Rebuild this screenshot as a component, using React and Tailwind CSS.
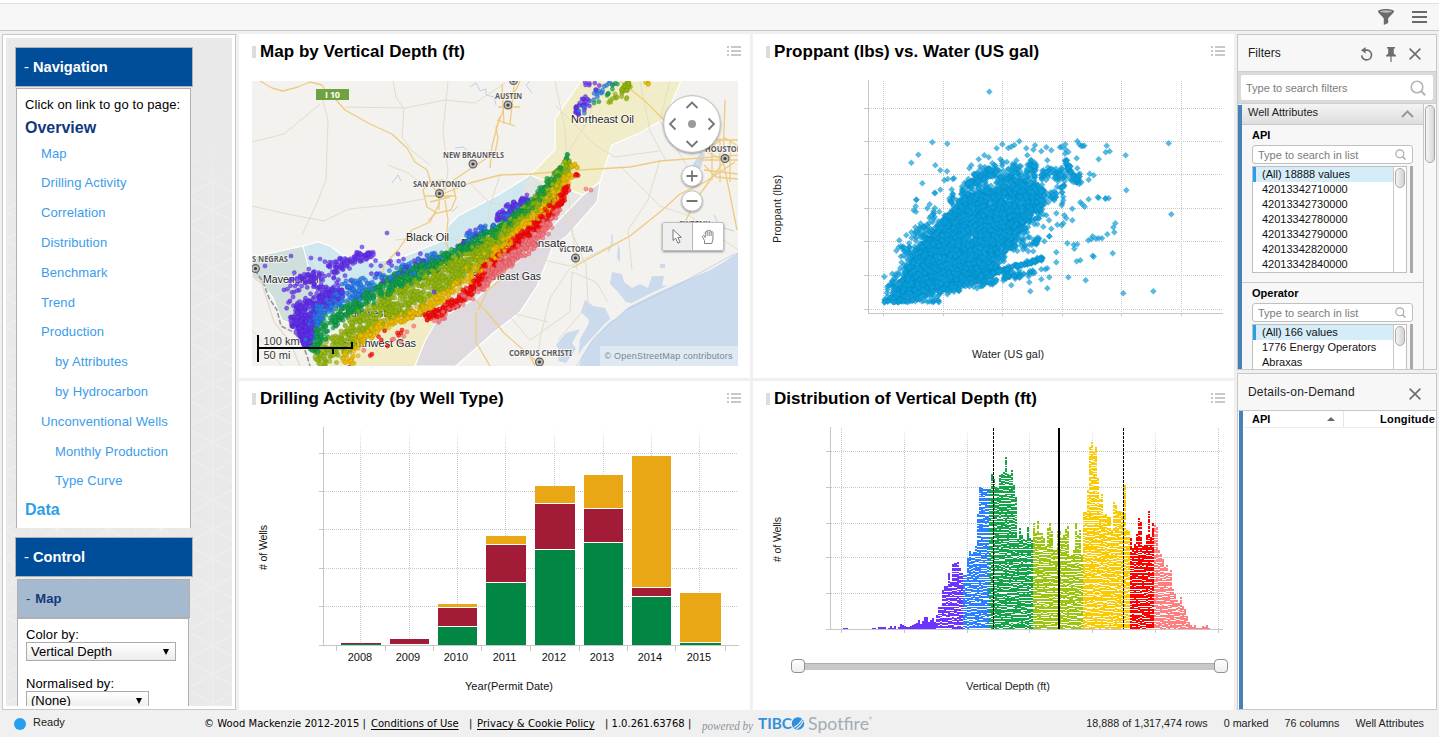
import React from 'react';

function makeRandom(seed) {
  let s = seed;
  return () => {
    s = (s * 1664525 + 1013904223) % 4294967296;
    return s / 4294967296;
  };
}

/* ---------- shared pieces ---------- */

function ListIcon() {
  return (
    <svg width="14" height="11" viewBox="0 0 14 11" fill="#c8c8c8" shapeRendering="crispEdges">
      <path d="M0 0h2v2H0zM4 0h10v2H4zM0 4h2v2H0zM4 4h10v2H4zM0 8h2v2H0zM4 8h10v2H4z" />
    </svg>
  );
}

function CloseIcon() {
  return (
    <svg width="12" height="12" viewBox="0 0 12 12" fill="none" stroke="#6e6e6e" strokeWidth="1.6">
      <path d="M.6.6l10.8 10.8M11.4.6L.6 11.4" />
    </svg>
  );
}

function SearchIcon({ size, color }) {
  return (
    <svg width={size} height={size} viewBox="0 0 16 16" fill="none" stroke={color} strokeWidth="1.6">
      <circle cx="7" cy="7" r="5.8" />
      <path d="M11.2 11.2l4 4" strokeWidth="2" />
    </svg>
  );
}

function ChartPanel({ title, children }) {
  return (
    <section className="flex min-h-0 min-w-0 flex-col overflow-hidden bg-white">
      <header className="flex h-8 shrink-0 items-center pr-[9px] pl-[13px]">
        <span className="mt-[4px] h-3 w-1 bg-[#dcdcdc]" />
        <h2 className="mt-[4px] ml-1 text-[17px] leading-5 font-bold tracking-[0.04px] whitespace-nowrap text-black">{title}</h2>
        <span className="mt-[3px] ml-auto">
          <ListIcon />
        </span>
      </header>
      {children}
    </section>
  );
}

const DOTTED = { stroke: '#c9c9c9', strokeDasharray: '1 1', strokeWidth: 1, shapeRendering: 'crispEdges' };
const AXIS = { stroke: '#c6c6c6', strokeWidth: 1, fill: 'none', shapeRendering: 'crispEdges' };

/* ---------- map ---------- */

const COLORS = {
  purple: ['#6431f0', '#4a22b8'],
  blue: ['#2a7bea', '#1b5cb8'],
  green: ['#12a24a', '#0a7836'],
  olive: ['#93b80f', '#6f8d08'],
  yellow: ['#efbe00', '#b98f00'],
  red: ['#fb0a0a', '#c00000'],
  pink: ['#f47880', '#d04a55'],
};

const BANDS = [
  ['purple', 220, [[291, 322, 8], [303, 320, 10], [306, 335, 8], [308, 345, 4]]],
  ['purple', 200, [[298, 315, 12], [318, 303, 9], [342, 290, 7]]],
  ['purple', 75, [[330, 270, 9], [350, 261, 7], [374, 252, 4]]],
  ['purple', 50, [[295, 280, 7], [312, 273, 8], [325, 287, 8]]],
  ['purple', 48, [[280, 298, 12], [300, 290, 18], [350, 275, 20]]],
  ['purple', 26, [[370, 270, 18], [400, 265, 11], [425, 258, 6]]],
  ['purple', 60, [[496, 220, 3], [510, 208, 6], [529, 197, 4]]],
  ['purple', 12, [[455, 246, 6], [478, 232, 5], [494, 224, 6]]],
  ['blue', 260, [[308, 345, 4], [315, 317, 7], [328, 304, 9], [352, 290, 11], [372, 286, 8]]],
  ['blue', 75, [[372, 282, 8], [396, 276, 8], [414, 266, 8], [442, 252, 5]]],
  ['blue', 35, [[465, 240, 4], [480, 232, 4], [496, 227, 4]]],
  ['blue', 24, [[500, 222, 5], [515, 210, 4], [528, 200, 4]]],
  ['green', 210, [[313, 352, 5], [322, 328, 10], [342, 313, 6], [374, 295, 8]]],
  ['green', 340, [[374, 294, 9], [400, 280, 9], [437, 263, 7], [474, 243, 5]]],
  ['green', 190, [[474, 243, 6], [500, 228, 6], [512, 218, 6], [533, 203, 4], [553, 180, 6], [562, 165, 3]]],
  ['green', 6, [[567, 160, 1], [568, 149, 1]]],
  ['olive', 270, [[318, 363, 10], [340, 343, 12], [366, 320, 12], [390, 307, 12]]],
  ['olive', 580, [[385, 309, 14], [423, 287, 15], [463, 265, 12], [490, 245, 8]]],
  ['olive', 300, [[490, 245, 7], [510, 225, 6], [533, 208, 7], [548, 195, 7], [560, 177, 8], [569, 160, 3]]],
  ['yellow', 75, [[348, 364, 8], [354, 345, 7], [373, 329, 6]]],
  ['yellow', 150, [[373, 329, 6], [413, 314, 5], [440, 299, 6]]],
  ['yellow', 340, [[438, 300, 5], [470, 274, 8], [497, 251, 7], [512, 232, 5], [540, 211, 6], [556, 193, 6], [570, 173, 4]]],
  ['yellow', 8, [[572, 168, 2], [577, 166, 3]]],
  ['red', 11, [[347, 364, 7], [380, 342, 10], [406, 325, 6]]],
  ['red', 100, [[426, 318, 4], [447, 308, 5], [472, 290, 5]]],
  ['red', 300, [[470, 290, 5], [490, 265, 6], [510, 246, 5], [535, 226, 5], [557, 204, 6], [569, 186, 3]]],
  ['red', 4, [[575, 175, 2], [581, 173, 1]]],
  ['pink', 45, [[433, 321, 4], [455, 303, 6], [482, 286, 6]]],
  ['pink', 300, [[478, 288, 5], [495, 269, 7], [520, 252, 7], [541, 232, 7], [558, 208, 4]]],
  ['pink', 7, [[364, 352, 4], [395, 340, 6], [413, 325, 4]]],
  ['purple', 26, [[574, 113, 5], [580, 108, 6], [588, 98, 5]]],
  ['purple', 7, [[584, 82, 3], [592, 88, 6], [603, 84, 4]]],
  ['blue', 22, [[578, 115, 3], [592, 100, 4], [604, 87, 5], [612, 82, 3]]],
  ['green', 9, [[588, 104, 3], [608, 96, 4], [616, 83, 4]]],
  ['olive', 12, [[606, 102, 4], [616, 94, 4], [627, 98, 4]]],
  ['olive', 30, [[622, 91, 3], [630, 83, 4]]],
  ['yellow', 4, [[645, 82, 2], [650, 84, 2]]],
];

function buildWells() {
  const rnd = makeRandom(77);
  const dots = [];
  BANDS.forEach(([color, count, pts]) => {
    const lengths = pts.slice(1).map((p, i) => Math.hypot(p[0] - pts[i][0], p[1] - pts[i][1]));
    const total = lengths.reduce((a, b) => a + b, 0);
    for (let n = 0; n < count; n++) {
      let d = rnd() * total;
      let i = 0;
      while (i < lengths.length - 1 && d > lengths[i]) {
        d -= lengths[i];
        i++;
      }
      const t = Math.min(1, d / lengths[i]);
      const a = pts[i];
      const b = pts[i + 1];
      const w = a[2] + (b[2] - a[2]) * t;
      const off = (rnd() * 1.7 + rnd() * 0.6 - 1.15) * w;
      const nx = -(b[1] - a[1]) / lengths[i];
      const ny = (b[0] - a[0]) / lengths[i];
      dots.push({ x: a[0] + (b[0] - a[0]) * t + nx * off, y: a[1] + (b[1] - a[1]) * t + ny * off, color, k: rnd() });
    }
  });
  [[387, 233], [362, 247], [291, 256], [265, 266], [311, 258], [320, 259], [398, 254], [434, 292]].forEach(([x, y]) =>
    dots.push({ x, y, color: 'purple', k: 1 })
  );
  [[586, 189], [591, 190]].forEach(([x, y]) => dots.push({ x, y, color: 'pink', k: 1 }));
  return dots.sort((p, q) => p.k - q.k);
}
const WELLS = buildWells();

const CITIES = [
  ['AUSTIN', 495, 99, 27, 508, 105],
  ['NEW BRAUNFELS', 443, 157.5, 61, 473, 164],
  ['SAN ANTONIO', 413, 187, 53, 439.5, 193.5],
  ['S NEGRAS', 252, 262, 36, 255.5, 268.5],
  ['VICTORIA', 559, 251.5, 34, 575.5, 258],
  ['HOUSTON', 705, 152, 38, 725, 158.5],
  ['CORPUS CHRISTI', 509, 355.5, 63, 539.5, 362],
  ['SWEENY', 679, 226.5, 31, -10, -10],
];

const REGIONS = [
  ['Northeast Oil', 571, 123, 63],
  ['Black Oil', 406, 240.5, 43],
  ['Maverick Oil', 263, 282.5, 58],
  ['Eastern Condensate', 461, 247, 105],
  ['Southeast Gas', 472, 280, 69],
  ['Southwest Condensate', 338, 317, 107],
  ['Southwest Gas', 342, 346.5, 74],
];

const MAJOR_ROADS = [
  'M260 81l12 7 11 3 15-4 12-5 12 3 3 5 6 4 14 16 25 14 22 10 15 14 8 14 12 8 5 16 8 8 6 4',
  'M438 196l10-12 25-17 22-14 3-15 -2-10 6-14 4-14 10-10 4-9',
  'M440 195l30-12 30-8 30-1 50-4 50-3 30-6 80-6',
  'M440 202l-10 20-18 8-14 20-14 15-2 16',
  'M445 200l3 20-2 22 10 30 16 25 14 14 18 22 32 28',
  'M572 268l18-10 40-22 30-24 20-18 25-12 30-20',
  'M620 81l25 20 40 40 40 20M725 160l-28 38-18 36M725 100l-2 60 14 70',
  'M478 310l10-20 12-10 30-45 25-30',
  'M490 366l-14-24 0-30M535 366l-6-12',
  'M423 190l6-8 14-2 10 6 3 12-5 12-14 3-10-6zM430 202l20-5M439 180v30M424 196h32M436 213l-8 8',
  'M705 140h33M700 160h38M704 170l34 4M712 140v40M720 138v44M730 140v42M705 150l20-12 13 8M704 165l12 12 22 2',
  'M500 95l20 2M498 107h22M502 84l2 40M514 86l-4 38M497 120l18 6M500 116l-8 30-2 22',
];

const MINOR_ROADS = [
  'M252 206l35 8 37 7 25-12 40-4 35-6',
  'M345 107l60 1 40-8 30 3 30-20',
  'M393 81l3 16 8 12-2 28 10 14 18 14',
  'M448 81l-5 50 5 40-3 20',
  'M320 90l8 30-2 60-10 25-14 30',
  'M252 142l32-8 36-30',
  'M388 165l20 8 20 16',
  'M395 240l45-4 60 14 70 16 60-30',
  'M577 270l-8-70-4-70-10-49',
  'M530 175l30 30 26 60 2 40-30 35',
  'M570 268l-20 30-10 40-2 28',
  'M572 272l24 10 12 20',
  'M555 105l40 40 20 12 44-6M600 81l-12 40-32 50',
  'M620 166l40 40 30 10 48 34M660 160l-12 40-20 30 4 40',
  'M640 81l10 50 16 30M670 81l-10 40 30 50',
  'M500 175l-12 36 4 24M470 183l20 20 46 6',
  'M474 310l34 2 40 10M476 310l-16 30-8 26M474 310l-20-30-6-20',
  'M530 340l-24-28M530 340l40-28 2-40M340 305l40 50M252 330l30 36',
];

function MapChart() {
  return (
    <svg className="block h-[312px] w-[511px] shrink-0" viewBox="239 66 511 312">
      <defs>
        <clipPath id="mapClip">
          <rect x="252" y="81" width="486" height="285" />
        </clipPath>
        <filter id="soft" x="-20%" y="-20%" width="140%" height="140%">
          <feDropShadow dx="0" dy="1" stdDeviation="1.2" floodColor="#000" floodOpacity=".45" />
        </filter>
      </defs>
      <g clipPath="url(#mapClip)">
        <rect x="252" y="81" width="486" height="285" fill="#f3f2ef" />
        <g fill="#cbdaed">
          <path d="M738 252l-14 10-14 8-18 7-20 8-18 10-22 8-12 12-16 14-14 14-8 14-4 12h164z" />
          <path d="M612 272l10 2 2 8 8 6 8-4 8 4 4-12 12 0-2 10 20-2-12 8-20 6-12 6-12-2-8-10-8-8zM585 300l8 6 12 2 6 12 14-2 4-8 2 12-18 12-10-4-16 2 2-12-8-8zM556 345l10-12 14-4-8 14 4 6-10 14-8-2 2-10zM660 264h5v4h-5zM693 164l8-12 4 2-4 14-6 4zM618 244l2 6 0 12-3-4z" />
          <path d="M588 325l16-6 8 4-10 10-14 10-10 16 2-20z" />
        </g>
        <path d="M732 254l-22 15-34 14-24 11-24 12-22 18-22 24-12 19" fill="none" stroke="#f3f2ef" strokeWidth="2" />
        <path d="M734 254l-58 32-50 24-32 28-20 32" fill="none" stroke="#b9c9de" strokeWidth=".7" />
        <g fill="none" stroke="#b5cde6" strokeWidth=".9">
          <path d="M470 87l6-4 4 8 6-2 0 6 8 2 2 8M392 183l6-8 3 6M455 148l8-1 4 3M452 212l6-6M532 93l-6-8 4-4M608 252l4-8 0-10M714 215l6 12 14 4M660 88l6 6 4-6 8 3M648 96l10-2 6 8" />
        </g>
        <g stroke="#fff" strokeWidth="1.2">
          <path d="M252 257l20-4 31-7 15 22 4 32 -12 40-14-14-14-6-10-24-14-16-6-3z" fill="#c9dcd8" fillOpacity=".85" />
          <path d="M303 246l15-4 12 4 12 9 28 7 30-4 30-12 15-6 3-14 10-10 42-22 30-19 10 6 10 14-60 40-90 60-50 12-30 20-4-30z" fill="#cbe5ed" fillOpacity=".9" />
          <path d="M530 175l53 20-60 65-60 50-26 10-22 46h-98l20-30 90-50 80-60z" fill="#e4e3df" fillOpacity=".8" stroke="none" />
          <path d="M581 81l-26 38v31l-25 25 53 20 17-13 12-37 28-12 25-15 10-23 6-14z" fill="#f2ecc4" fillOpacity=".9" />
          <path d="M322 366l24-36 91-14-12 25-10 25z" fill="#f2ecc4" stroke="none" />
          <path d="M437 320l40-22 55-50 51-53 17-13-3 20-30 34-14 10-16 40-17 26-28 22-36 32h-41l10-25z" fill="#dad6dd" fillOpacity=".85" />
        </g>
        <path d="M255 270l8 12 6 16 8 12 4 16 12 6 8 8 6 16 3 10" fill="none" stroke="#8f9a98" strokeWidth="1.6" strokeDasharray="5 2" />
        <path d="M252 276l10 8 12 38 16 20 10 24" fill="none" stroke="#e6d8cc" strokeWidth="1.3" />
        <g fill="none" stroke="#e3dccb" strokeWidth="1" strokeLinejoin="round">
          {MINOR_ROADS.map((d) => (
            <path key={d} d={d} />
          ))}
        </g>
        <g fill="none" stroke="#efcb80" strokeWidth="1.3" strokeLinejoin="round">
          {MAJOR_ROADS.map((d) => (
            <path key={d} d={d} />
          ))}
        </g>
        <g fontFamily="'Noto Sans','Open Sans',sans-serif" fontSize="8.6" fontWeight="700" fill="#5c5c5c" stroke="#fff" strokeWidth="1.6" strokeOpacity=".8" paintOrder="stroke">
          {CITIES.map(([name, x, y, w]) => (
            <text key={name} x={x} y={y} textLength={w} lengthAdjust="spacingAndGlyphs">{name}</text>
          ))}
        </g>
        {[...CITIES.map((c) => [c[4], c[5]]), [513.5, 80.5]].map(([x, y]) => (
          <g key={`${x}-${y}`}>
            <circle cx={x} cy={y} r="3.9" fill="#bcbcbc" stroke="#5d5d5d" strokeWidth="1.1" />
            <circle cx={x} cy={y} r="1.6" fill="#3c3c3c" />
          </g>
        ))}
        <rect x="316" y="89" width="33" height="11" fill="#70a340" />
        <text x="325" y="98" textLength="15" fontFamily="'Open Sans',sans-serif" fontSize="9" fontWeight="700" fill="#fff">I 10</text>
        <g fontFamily="'Liberation Sans',sans-serif" fontSize="11.3" fill="#222" stroke="#fff" strokeWidth="1.8" strokeOpacity=".75" paintOrder="stroke">
          {REGIONS.map(([name, x, y, w]) => (
            <text key={name} x={x} y={y} textLength={w} lengthAdjust="spacingAndGlyphs">{name}</text>
          ))}
        </g>
        <g strokeWidth=".6">
          {WELLS.map((d, i) => (
            <circle key={i} cx={d.x.toFixed(1)} cy={d.y.toFixed(1)} r="2.1" fill={COLORS[d.color][0]} fillOpacity=".72" stroke={COLORS[d.color][1]} strokeOpacity=".6" />
          ))}
        </g>
        <rect x="600" y="346" width="138" height="20" fill="#e6edf6" fillOpacity=".75" />
        <text x="604.5" y="359" textLength="128" fontFamily="'Liberation Sans',sans-serif" fontSize="9" fill="#7d868f">© OpenStreetMap contributors</text>
        <path d="M258 335v27M257 348h95v-6M333 348v6" fill="none" stroke="#000" strokeWidth="2" shapeRendering="crispEdges" />
        <g fontFamily="'Liberation Sans',sans-serif" fontSize="11" fill="#333" stroke="#fff" strokeWidth="1.6" strokeOpacity=".7" paintOrder="stroke">
          <text x="263.5" y="345">100 km</text>
          <text x="263.5" y="358.5">50 mi</text>
        </g>
        <g filter="url(#soft)" fill="#fff" stroke="#b5b5b5" strokeWidth=".8">
          <circle cx="692" cy="124" r="28.3" />
          <circle cx="692" cy="176" r="10.2" />
          <circle cx="692" cy="201" r="10.2" />
          <rect x="662.5" y="222.5" width="61" height="28" rx="1.5" />
        </g>
        <path d="M663 223h29v27h-29z" fill="#efefef" />
        <path d="M692.5 223v27" stroke="#b5b5b5" />
        <circle cx="692" cy="124" r="4" fill="#9b9b9b" />
        <g fill="none" stroke="#757575" strokeWidth="1.8">
          <path d="M686.500 108l5.500-5.500 5.500 5.500M686.500 141l5.500 5.500 5.500-5.500M675.500 118.500l-5.500 5.500 5.500 5.500M708.500 118.500l5.500 5.500-5.500 5.500" />
          <path d="M686.500 176h11M692 170.500v11M686.500 201h11" />
        </g>
        <path d="M673 229.500v11l2.600-2.400 2.300 5 2.200-1-2.300-4.800h3.500z" fill="#fff" stroke="#777" strokeWidth="1" />
        <path d="M704.500 243.500v-3l-2.300-4 1.500-1 1.600 2v-5.500q1-1.400 1.900 0v-1.200q1-1.300 2 0 1-1 1.900.3v1q1.200-1 2 .4l-.3 7.500-1 3.500zM707.200 232v4M709.200 231.500v4.500M711.100 232v4" fill="#fff" stroke="#777" strokeWidth=".9" />
      </g>
    </svg>
  );
}

/* ---------- scatter ---------- */

const CLOUD = [[405, 815], [470, 812], [590, 780], [700, 752], [745, 725], [740, 690], [765, 650], [830, 580], [860, 530], [885, 480], [850, 458], [770, 470], [700, 480], [650, 500], [600, 545], [560, 590], [510, 640], [475, 690], [455, 750]];

const SCATTER_OUTLIERS = [
  [718, 185], [547, 337], [592, 341], [505, 374], [484, 398], [556, 406], [571, 421], [591, 424], [517, 460], [499, 509], [499, 509], [571, 479], [555, 490],
  [554, 488], [539, 523], [532, 535], [497, 529], [491, 541], [498, 545], [568, 545], [583, 451], [593, 447], [609, 447], [612, 445], [604, 518], [608, 493],
  [740, 355], [757, 343], [775, 354], [784, 350], [793, 345], [808, 334], [829, 355], [832, 376], [855, 346], [850, 359], [874, 364], [889, 352], [904, 361],
  [892, 391], [930, 352], [935, 350], [946, 343], [946, 358], [945, 371], [955, 366], [982, 334], [988, 343], [994, 348], [1003, 347], [998, 348], [1070, 347],
  [1067, 367], [1079, 364], [1046, 388], [1127, 376], [1256, 340], [980, 385], [982, 415], [951, 391], [948, 400], [960, 410], [1019, 431], [1031, 436], [1016, 449],
  [994, 457], [988, 440], [971, 457], [1129, 481], [1264, 553], [1043, 502], [1046, 503], [1067, 505], [1066, 506], [1076, 505], [1016, 508], [991, 517], [997, 523],
  [1004, 530], [967, 536], [967, 571], [1096, 580], [1090, 592], [1093, 607], [1072, 613], [1056, 625], [1046, 625], [1038, 626], [1028, 619], [1024, 628], [1015, 631],
  [1088, 670], [1028, 677], [1031, 680], [991, 691], [980, 694], [952, 640], [971, 644], [982, 643], [973, 656], [955, 742], [1007, 751], [1120, 790], [1210, 784],
  [919, 667], [919, 697], [898, 742], [892, 775], [841, 784], [838, 757], [874, 748], [784, 766], [892, 715], [886, 718], [874, 718], [919, 550], [943, 556], [949, 565],
  [937, 520], [935, 526], [940, 511], [937, 487], [919, 493], [913, 511], [895, 517], [889, 556], [897, 571], [880, 590], [904, 596], [898, 619], [898, 619], [883, 634],
  [940, 580], [935, 586], [922, 584], [862, 583], [850, 664], [835, 664], [860, 640], [403, 740], [427, 731], [421, 763], [412, 770], [439, 662], [446, 652], [448, 631],
  [469, 616], [484, 607], [497, 604], [496, 592], [686, 388], [703, 376], [716, 382], [664, 406], [658, 415], [691, 409], [751, 388], [757, 394], [727, 400], [404, 817],
];

function buildScatter() {
  const rnd = makeRandom(1234);
  const inside = (x, y) => {
    let hit = false;
    for (let i = 0, j = CLOUD.length - 1; i < CLOUD.length; j = i++) {
      const [xi, yi] = CLOUD[i];
      const [xj, yj] = CLOUD[j];
      if (yi > y !== yj > y && x < ((xj - xi) * (y - yi)) / (yj - yi) + xi) hit = !hit;
    }
    return hit;
  };
  const pts = [];
  while (pts.length < 3400) {
    const x = 390 + rnd() * 510;
    const y = 440 + rnd() * 385;
    if (inside(x, y)) pts.push([x + (rnd() - 0.5) * 22, Math.min(817, y + (rnd() - 0.5) * 18)]);
  }
  const strip = (n, x0, y0, x1, y1, w) => {
    for (let i = 0; i < n; i++) {
      const t = rnd();
      pts.push([x0 + (x1 - x0) * t + (rnd() - 0.5) * 8, Math.min(817, y0 + (y1 - y0) * t + (rnd() + rnd() - 1) * w)]);
    }
  };
  strip(130, 690, 742, 880, 684, 8);
  strip(40, 760, 740, 860, 728, 14);
  strip(40, 560, 795, 790, 742, 10);
  strip(30, 405, 815, 570, 812, 8);
  strip(50, 455, 670, 560, 560, 34);
  strip(80, 600, 510, 720, 450, 42);
  strip(70, 650, 460, 740, 415, 24);
  strip(80, 710, 430, 860, 410, 30);
  strip(90, 740, 460, 860, 440, 30);
  strip(75, 870, 430, 995, 440, 24);
  strip(20, 945, 390, 965, 430, 14);
  strip(90, 770, 640, 880, 530, 34);
  strip(40, 860, 530, 940, 470, 28);
  strip(35, 780, 660, 870, 620, 24);
  strip(40, 755, 690, 800, 590, 20);
  strip(16, 405, 800, 450, 720, 14);
  return pts.concat(SCATTER_OUTLIERS);
}
const SCATTER = buildScatter();

function ScatterChart() {
  return (
    <svg className="block h-[312px] w-[481px] shrink-0" viewBox="753 66 481 312">
      <g {...DOTTED}>
        {[883.5, 943.5, 1002.5, 1062.5, 1121.5, 1181.5].map((x) => (
          <path key={x} d={`M${x} 81V313`} />
        ))}
        {[108.5, 141.5, 174.5, 208.5, 241.5, 275.5, 309.5].map((y) => (
          <path key={y} d={`M869 ${y}H1222`} />
        ))}
      </g>
      <path
        {...AXIS}
        d="M868.5 80V313.5H1223M883.500 313v3M943.500 313v3M1002.500 313v3M1062.500 313v3M1121.500 313v3M1181.500 313v3M864 108.500h4M864 141.500h4M864 174.500h4M864 208.500h4M864 241.500h4M864 275.500h4M864 309.500h4"
      />
      <g fill="#0aa0dc" fillOpacity=".7" stroke="#0478b0" strokeOpacity=".4" strokeWidth=".6">
        {SCATTER.map(([x, y], i) => (
          <path key={i} d={`M${(750 + x / 3).toFixed(1)} ${(30 + y / 3 - 3).toFixed(1)}l3 3-3 3-3-3z`} />
        ))}
      </g>
      <g fontFamily="'Liberation Sans',sans-serif" fontSize="10.8" fill="#222">
        <text x="972" y="358" textLength="72">Water (US gal)</text>
        <text transform="translate(781 243) rotate(-90)" textLength="68">Proppant (lbs)</text>
      </g>
    </svg>
  );
}

/* ---------- stacked bars ---------- */

const GREEN = '#018643';
const CRIMSON = '#a21c37';
const AMBER = '#e9a715';
const YEARS = [
  [2008, 341, 40, 348, [[CRIMSON, 643, 644], [GREEN, 644, 645]]],
  [2009, 390, 39, 396, [[CRIMSON, 639, 644]]],
  [2010, 438, 39, 444, [[AMBER, 604, 607], [CRIMSON, 608, 626], [GREEN, 627, 645]]],
  [2011, 486, 40, 493, [[AMBER, 536, 544], [CRIMSON, 545, 582], [GREEN, 583, 645]]],
  [2012, 535, 40, 542, [[AMBER, 486, 503], [CRIMSON, 504, 549], [GREEN, 550, 645]]],
  [2013, 584, 39, 590, [[AMBER, 475, 508], [CRIMSON, 509, 542], [GREEN, 543, 645]]],
  [2014, 632, 39, 638, [[AMBER, 456, 587], [CRIMSON, 588, 596], [GREEN, 597, 645]]],
  [2015, 680, 41, 687, [[AMBER, 593, 642], [GREEN, 643, 645]]],
];

function ActivityChart() {
  return (
    <svg className="block h-[297px] w-[511px] shrink-0" viewBox="239 413 511 297">
      <defs>
        <linearGradient id="fadeTop" x1="0" y1="0" x2="0" y2="1">
          <stop offset="0" stopColor="#fff" />
          <stop offset="1" stopColor="#fff" stopOpacity="0" />
        </linearGradient>
      </defs>
      <g {...DOTTED}>
        {[360.5, 409.5, 457.5, 505.5, 554.5, 603.5, 651.5, 699.5].map((x) => (
          <path key={x} d={`M${x} 429V645`} />
        ))}
        {[453.5, 491.5, 529.5, 568.5, 606.5].map((y) => (
          <path key={y} d={`M324 ${y}H738`} />
        ))}
      </g>
      <rect x="325" y="427" width="413" height="22" fill="url(#fadeTop)" />
      <g shapeRendering="crispEdges">
        {YEARS.map(([year, x, w, , parts]) => (
          <g key={year}>
            <rect x={x} y={parts[0][1]} width={w} height={645 - parts[0][1]} fill="#fff" />
            {parts.map(([c, top, bottom]) => (
              <rect key={top} x={x} y={top} width={w} height={bottom - top} fill={c} />
            ))}
          </g>
        ))}
      </g>
      <path
        {...AXIS}
        d="M323.5 427V645M319 645.5H739M336.500 645v6M385.500 645v6M433.500 645v6M481.500 645v6M530.500 645v6M579.500 645v6M627.500 645v6M675.500 645v6M725.500 645v6M319 453.500h4M319 491.500h4M319 529.500h4M319 568.500h4M319 606.500h4"
      />
      <g fontFamily="'Liberation Sans',sans-serif" fontSize="11" fill="#111">
        {YEARS.map(([year, , , tx]) => (
          <text key={year} x={tx - 0.3} y="661">{year}</text>
        ))}
        <text x="465" y="690" textLength="88">Year(Permit Date)</text>
        <text transform="translate(267 570) rotate(-90)" textLength="45" fontSize="10.6">{'# of Wells'}</text>
      </g>
    </svg>
  );
}

/* ---------- histogram ---------- */

const HIST_X0 = 870;
const HIST_TOPS = [
  628, 624, 624, 628, 621, 621, 621, 622, 628, 624, 618, 625, 618, 628, 621, 612, 615, 618, 621, 621, 618, 615, 612, 609, 600, 612, 603, 591, 591, 606, 600, 594, 606, 585, 562, 562,
  510, 498, 498, 459, 486, 432, 429, 426, 444, 460, 465, 465, 414, 393, 402, 396, 378, 282, 201, 204, 207, 207, 207, 207, 162, 177, 200, 205, 165, 162, 156, 111,
  162, 165, 150, 195, 231, 357, 324, 345, 357, 360, 321, 354, 360, 309, 340, 303, 340, 340, 355, 378, 324, 309, 333, 390, 390, 333, 333, 354, 345, 327, 318, 408,
  405, 390, 309, 345, 330, 405, 276, 276, 210, 81, 66, 96, 81, 174, 237, 222, 285, 282, 291, 291, 330, 246, 255, 273, 273, 276, 195, 330, 333, 354, 385, 372, 342,
  294, 306, 378, 375, 345, 273, 350, 309, 315, 321, 390, 402, 417, 440, 435, 458, 450, 507, 522, 540, 550, 531, 558, 567, 588, 606, 615, 621, 615, 625, 624, 624, 618,
  621, 615, 624,
];

function histColor(x) {
  if (x < 963) return '#6f33ff';
  if (x < 988) return '#2a80ff';
  if (x < 1033) return '#14a54b';
  if (x < 1083) return '#9bc50f';
  if (x < 1129) return '#fbcb02';
  if (x < 1154) return '#fe0000';
  return '#ff7e80';
}

function buildHistogram() {
  const rnd = makeRandom(42);
  const bars = [];
  const gaps = [];
  const n = HIST_TOPS.length;
  const offset = new Array(90).fill(0);
  HIST_TOPS.forEach((cy, i) => {
    const x = Math.round(HIST_X0 + ((1210 - HIST_X0) * i) / n);
    const x2 = Math.round(HIST_X0 + ((1210 - HIST_X0) * (i + 1)) / n);
    const top = Math.round(420 + cy / 3);
    const w = x2 - x;
    bars.push([x, top, w, 629 - top, histColor(x)]);
    for (let k = 0; k < 90; k++) {
      if (rnd() < 0.38) offset[k] = Math.floor(rnd() * 3) - 1;
      const y = 627 - k * 3 + offset[k];
      if (y > top + 1 && 629 - top > 12 && rnd() < 0.86) gaps.push([x, y, w]);
    }
  });
  return { bars, gaps };
}
const HIST = buildHistogram();

function DistributionChart() {
  return (
    <svg className="block h-[297px] w-[481px] shrink-0" viewBox="753 413 481 297">
      <defs>
        <linearGradient id="knob" x1="0" y1="0" x2="0" y2="1">
          <stop offset="0" stopColor="#fff" />
          <stop offset="1" stopColor="#eee" />
        </linearGradient>
      </defs>
      <g {...DOTTED}>
        {[841.5, 904.5, 967.5, 1029.5, 1092.5, 1155.5, 1218.5].map((x) => (
          <path key={x} d={`M${x} 428V629`} />
        ))}
        {[451.5, 487.5, 523.5, 557.5, 593.5].map((y) => (
          <path key={y} d={`M831 ${y}H1222`} />
        ))}
      </g>
      <rect x="850" y="427" width="360" height="18" fill="url(#fadeTop)" />
      <g shapeRendering="crispEdges">
        <rect x="843" y="628" width="5" height="1" fill="#6f33ff" />
        {HIST.bars.map(([x, y, w, h, c]) => (
          <rect key={x} x={x} y={y} width={w} height={h} fill={c} />
        ))}
        <path d={HIST.gaps.map(([x, y, w]) => `M${x} ${y}h${w}v1h-${w}z`).join('')} fill="#fff" />
        <path d="M993.5 428V629M1123.5 428V629" stroke="#000" strokeDasharray="3 1" />
        <path d="M1059 428V629" stroke="#000" strokeWidth="2" />
      </g>
      <path
        {...AXIS}
        d="M830.5 427V629M826 629.5H1223M841.500 629v4M904.500 629v4M967.500 629v4M1029.500 629v4M1092.500 629v4M1155.500 629v4M1218.500 629v4M826 451.500h4M826 487.500h4M826 523.500h4M826 557.500h4M826 593.500h4"
      />
      <rect x="798" y="663" width="423" height="7" fill="#c8c8c8" />
      <rect x="798" y="663" width="423" height="1" fill="#adadad" />
      <rect x="791.500" y="659.500" width="13" height="13" rx="3.500" fill="url(#knob)" stroke="#929292" />
      <rect x="1214.500" y="659.500" width="13" height="13" rx="3.500" fill="url(#knob)" stroke="#929292" />
      <g fontFamily="'Liberation Sans',sans-serif" fontSize="11" fill="#222">
        <text x="966" y="690" textLength="84">Vertical Depth (ft)</text>
        <text transform="translate(781 562) rotate(-90)" textLength="45" fontSize="10.6">{'# of Wells'}</text>
      </g>
    </svg>
  );
}

/* ---------- left navigation ---------- */

const NAV = [
  ['Map', 'pl-4'],
  ['Drilling Activity', 'pl-4'],
  ['Correlation', 'pl-4'],
  ['Distribution', 'pl-4'],
  ['Benchmark', 'pl-4'],
  ['Trend', 'pl-4'],
  ['Production', 'pl-4'],
  ['by Attributes', 'pl-[30px]'],
  ['by Hydrocarbon', 'pl-[30px]'],
  ['Unconventional Wells', 'pl-4'],
  ['Monthly Production', 'pl-[30px]'],
  ['Type Curve', 'pl-[30px]'],
];

function NavHeading({ children }) {
  return (
    <div className="flex h-10 w-[178px] shrink-0 items-center border border-[#b0b0b0] bg-[#004d99] pl-2 text-[14.67px] font-bold text-white">
      <span className="mr-1 font-normal">-</span>
      {children}
    </div>
  );
}

function SelectBox({ value, className }) {
  return (
    <div className={`flex h-[19px] items-center justify-between border border-[#ababab] bg-linear-to-b from-white to-[#ececec] pr-[6px] pl-1 ${className}`}>
      <span>{value}</span>
      <svg width="6" height="6" viewBox="0 0 6 6">
        <path d="M0 0h6L3 6z" fill="#000" />
      </svg>
    </div>
  );
}

function Sidebar() {
  return (
    <aside className="ml-[2px] flex h-[676px] w-[234px] shrink-0 border border-[#c8c8c8] bg-white p-[3px]">
      <div className="relative flex w-full flex-col overflow-hidden bg-[#e9e9e9] pl-[9px]">
        <svg className="absolute inset-0 h-full w-full">
          <defs>
            <pattern id="tri" width="52" height="29" patternUnits="userSpaceOnUse" x="25" y="13">
              <path d="M0 0v29M26 0v29M0 0l52 29M52 0L0 29" stroke="#eeeeee" strokeWidth="1.2" fill="none" />
            </pattern>
            <linearGradient id="triFade" x1="0" y1="0" x2="0" y2="1">
              <stop offset=".1" stopColor="#e9e9e9" />
              <stop offset=".24" stopColor="#e9e9e9" stopOpacity="0" />
            </linearGradient>
          </defs>
          <rect width="100%" height="100%" fill="url(#tri)" />
          <rect width="100%" height="100%" fill="url(#triFade)" />
        </svg>
        <nav className="relative mt-[9px] flex flex-col">
          <NavHeading>Navigation</NavHeading>
          <div className="mt-px ml-px flex h-[440px] w-[175px] flex-col border border-b-0 border-[#b0b0b0] bg-white pt-[5px] pl-2 text-[13px]">
            <p className="h-[22px] leading-[22px] tracking-[0.1px] text-black">Click on link to go to page:</p>
            <p className="h-[22.6px] text-[16px] leading-[23px] font-bold text-[#12387c]">Overview</p>
            {NAV.map(([label, pad]) => (
              <a key={label} className={`h-[29.8px] shrink-0 leading-[29.8px] tracking-[0.1px] text-[#3b9cec] ${pad}`}>
                {label}
              </a>
            ))}
            <p className="text-[16px] leading-[28px] font-bold text-[#2d9eea]">Data</p>
          </div>
        </nav>
        <div className="relative mt-[9px] flex flex-col">
          <NavHeading>Control</NavHeading>
          <div className="mt-[2px] ml-[2px] flex h-[39px] w-[173px] items-center border border-[#b0b0b0] bg-[#a5bacf] pl-2 text-[13px] font-bold text-[#12387c]">
            <span className="mr-[5px] font-normal">-</span>Map
          </div>
          <div className="ml-[2px] flex w-[172px] flex-col border border-[#b0b0b0] bg-white pt-2 pb-5 pl-2 text-[13px] text-black">
            <span className="h-[15px] leading-[15px] tracking-[0.1px]">Color by:</span>
            <SelectBox value="Vertical Depth" className="w-[150px]" />
            <span className="mt-[15px] h-[15px] leading-[15px] tracking-[0.1px]">Normalised by:</span>
            <SelectBox value="(None)" className="w-[123px]" />
          </div>
        </div>
      </div>
    </aside>
  );
}

/* ---------- right column ---------- */

function ListFilter({ name, items, height }) {
  return (
    <div className="flex flex-col pl-[10px] text-[11px]">
      <p className="mt-[2px] mb-px h-[17px] leading-[17px] font-bold text-black">{name}</p>
      <div className="flex h-[19px] w-[161px] items-center justify-between rounded-[3px] border border-[#c0c0c0] bg-white pr-[6px] pl-[5px] text-[#7b7b7b]">
        <span className="pt-px">Type to search in list</span>
        <SearchIcon size={11} color="#a6a6a6" />
      </div>
      <div className={`mt-[2px] flex ${height}`}>
        <div className="flex w-[155px] border border-[#bfbfbf] bg-white">
          <ul className="flex-1 overflow-hidden">
            {items.map((item, i) => (
              <li
                key={item}
                className={`h-[15px] overflow-hidden leading-[15px] whitespace-nowrap text-[#111] ${i === 0 ? 'border-l-[3px] border-[#2aa0ea] bg-[#d5ecf9] pl-[6px]' : 'pl-[9px]'}`}
              >
                {item}
              </li>
            ))}
          </ul>
          <div className="w-[13px] border-l border-[#c8c8c8] px-px pt-px">
            <div className="h-[20px] w-[10px] rounded-[5px] border border-[#aaa] bg-linear-to-r from-[#f4f4f4] to-[#d2d2d2]" />
          </div>
        </div>
        <div className="ml-[3px] w-[3px] bg-[#a8a8a8]" />
      </div>
    </div>
  );
}

function FiltersPanel() {
  return (
    <section className="flex h-[336px] w-[200px] flex-col overflow-hidden border border-[#c8c8c8] bg-[#f7f7f7]">
      <header className="flex h-[36px] shrink-0 items-center pl-[10px]">
        <span className="text-[12px] text-[#222]">Filters</span>
        <svg className="mt-[2px] ml-[79px]" width="14" height="14" viewBox="0 0 14 14" fill="none" stroke="#6e6e6e" strokeWidth="1.7">
          <path d="M3.500 3.200h4a4.900 4.900 0 1 1-5.800 5.200" />
          <path d="M5.600 0L1 3.300l4.600 3.300z" fill="#6e6e6e" stroke="none" />
        </svg>
        <svg className="mt-[2px] ml-[12px]" width="10" height="15" viewBox="0 0 10 15" fill="#6e6e6e">
          <path d="M1 0h8v1.500H7.800v5L10 8.500V9.500H5.600V15H4.400V9.500H0V8.500l2.200-2v-5H1z" />
        </svg>
        <span className="mt-[2px] ml-[13px]">
          <CloseIcon />
        </span>
      </header>
      <div className="h-[33px] shrink-0 border-y border-[#cfcfcf] bg-[#dadada] px-[3px] py-[3px]">
        <div className="flex h-[25px] items-center justify-between rounded-[2px] bg-white pr-[7px] pl-[5px] text-[11px] text-[#7b7b7b]">
          <span className="pt-[2px]">Type to search filters</span>
          <SearchIcon size={16} color="#b4b4b4" />
        </div>
      </div>
      <div className="flex min-h-0 flex-1">
        <div className="mt-px w-1 shrink-0 bg-[#4682b8]" />
        <div className="flex w-[181px] shrink-0 flex-col overflow-hidden">
          <div className="flex h-[21px] shrink-0 items-center justify-between border-b border-[#c8c8c8] bg-linear-to-b from-[#f4f4f4] to-[#dedede] pr-[9px] pl-[6px] text-[11px] text-[#222]">
            <span className="-mt-[3px]">Well Attributes</span>
            <svg width="13" height="8" viewBox="0 0 13 8" fill="none" stroke="#999" strokeWidth="2">
              <path d="M1 7l5.500-5.500L12 7" />
            </svg>
          </div>
          <ListFilter
            name="API"
            height="h-[107px]"
            items={['(All) 18888 values', '42013342710000', '42013342730000', '42013342780000', '42013342790000', '42013342820000', '42013342840000']}
          />
          <div className="mt-[9px] h-px shrink-0 bg-[#c8c8c8]" />
          <ListFilter name="Operator" height="h-[46px]" items={['(All) 166 values', '1776 Energy Operators', 'Abraxas']} />
        </div>
        <div className="flex-1 border-l border-[#c8c8c8] pt-px pl-px">
          <div className="h-[58px] w-[10px] rounded-[5px] border border-[#a8a8a8] bg-linear-to-r from-[#f6f6f6] to-[#d6d6d6]" />
        </div>
      </div>
    </section>
  );
}

function DetailsPanel() {
  return (
    <section className="flex h-[337px] w-[200px] flex-col overflow-hidden border border-[#c8c8c8] bg-[#f7f7f7]">
      <header className="flex h-[36px] shrink-0 items-center justify-between pr-[15px] pl-[10px]">
        <span className="text-[12px] tracking-[0.2px] text-[#222]">Details-on-Demand</span>
        <span className="mt-[3px]">
          <CloseIcon />
        </span>
      </header>
      <div className="flex flex-1 border-t border-[#c8c8c8] bg-white pl-px">
        <div className="w-1 shrink-0 bg-[#4682b8]" />
        <div className="ml-px flex flex-1 flex-col overflow-hidden">
          <div className="flex h-[17px] items-center border-b border-[#ececec] text-[11px] leading-[16px] font-bold text-black">
            <span className="flex h-full w-[100px] items-center justify-between border-r border-[#e6e6e6] pr-[8px] pl-2">
              API
              <svg width="8" height="4" viewBox="0 0 8 4">
                <path d="M4 0l4 4H0z" fill="#666" />
              </svg>
            </span>
            <span className="flex-1 pr-px text-right tracking-[0.2px]">Longitude</span>
          </div>
        </div>
      </div>
    </section>
  );
}

/* ---------- top and bottom bars ---------- */

function TopBar() {
  return (
    <header className="mt-[3px] flex h-[28px] shrink-0 items-center border-t border-b border-t-[#dde2e2] border-b-[#c8c8c8] bg-[#f7f7f7]">
      <svg className="ml-[1378px]" width="16" height="16" viewBox="0 0 16 16" fill="#6a6a6a">
        <path d="M0 2.500C0 1 3.500 0 8 0s8 1 8 2.500c0 .8-4.200 5-5.800 6.800V14l-4.400 2V9.300C4.200 7.500 0 3.300 0 2.500z" />
        <ellipse cx="8" cy="2.500" rx="6" ry="1.200" fill="#bdbdbd" />
      </svg>
      <svg className="ml-[18px]" width="15" height="12" viewBox="0 0 15 12" fill="#6a6a6a" shapeRendering="crispEdges">
        <path d="M0 0h15v2H0zM0 5h15v2H0zM0 10h15v2H0z" />
      </svg>
    </header>
  );
}

function StatusBar() {
  return (
    <footer className="flex h-[27px] shrink-0 items-center text-[11px] whitespace-nowrap text-[#222]">
      <span className="ml-[14px] h-3 w-3 rounded-full bg-[#26a0ec]" />
      <span className="-mt-[2px] ml-[7px] w-[171px]">Ready</span>
      <div className="flex items-center font-['DejaVu_Sans',sans-serif] text-[10px] text-black">
        <span className="w-[167px] tracking-[0.04px]">© Wood Mackenzie 2012-2015 |</span>
        <span className="w-[98px] underline underline-offset-2">Conditions of Use</span>
        <span className="w-[8px]">|</span>
        <span className="w-[128px] tracking-[0.06px] underline underline-offset-2">Privacy &amp; Cookie Policy</span>
        <span className="w-[97px]">| 1.0.261.63768 |</span>
      </div>
      <svg width="172" height="26" viewBox="0 0 172 26">
        <text x="0" y="18.500" textLength="51" lengthAdjust="spacingAndGlyphs" fontFamily="'Liberation Serif',serif" fontStyle="italic" fontSize="13.500" fill="#8b949c">powered by</text>
        <text x="56" y="18" textLength="34" lengthAdjust="spacingAndGlyphs" fontFamily="Lato,sans-serif" fontSize="16" fontWeight="700" fill="#3390dc">TIBC</text>
        <circle cx="96" cy="12.500" r="6.200" fill="#2f8fdc" />
        <path d="M92 16.500c3-1.500 6.500-5 8.500-8.500M94.500 18c3-2 5.500-5 6.800-8" stroke="#f0f0f0" strokeWidth="1.100" fill="none" />
        <text x="106" y="18.500" textLength="61" lengthAdjust="spacingAndGlyphs" fontFamily="Lato,sans-serif" fontSize="17" fill="#a3acb4">Spotfire</text>
        <circle cx="168.500" cy="7" r="1" fill="none" stroke="#a3acb4" strokeWidth=".6" />
      </svg>
      <div className="ml-auto flex gap-4 pr-[15px] text-[10.75px]">
        <span>18,888 of 1,317,474 rows</span>
        <span>0 marked</span>
        <span>76 columns</span>
        <span>Well Attributes</span>
      </div>
    </footer>
  );
}

export default function App() {
  return (
    <div className="h-[740px] w-[1439px] overflow-hidden bg-white font-['Liberation_Sans',Arial,sans-serif]">
      <div className="flex h-[737px] flex-col bg-white">
        <TopBar />
        <div className="flex min-h-0 flex-1 flex-col bg-[#f0f0f0]">
          <main className="flex h-[679px] shrink-0 pt-[3px]">
            <Sidebar />
            <div className="ml-[3px] grid h-[676px] grid-cols-[511px_481px] grid-rows-[344px_329px] gap-[3px]">
              <ChartPanel title="Map by Vertical Depth (ft)">
                <MapChart />
              </ChartPanel>
              <ChartPanel title="Proppant (lbs) vs. Water (US gal)">
                <ScatterChart />
              </ChartPanel>
              <ChartPanel title="Drilling Activity (by Well Type)">
                <ActivityChart />
              </ChartPanel>
              <ChartPanel title="Distribution of Vertical Depth (ft)">
                <DistributionChart />
              </ChartPanel>
            </div>
            <div className="ml-[3px] flex flex-col gap-[3px]">
              <FiltersPanel />
              <DetailsPanel />
            </div>
          </main>
          <StatusBar />
        </div>
      </div>
    </div>
  );
}
